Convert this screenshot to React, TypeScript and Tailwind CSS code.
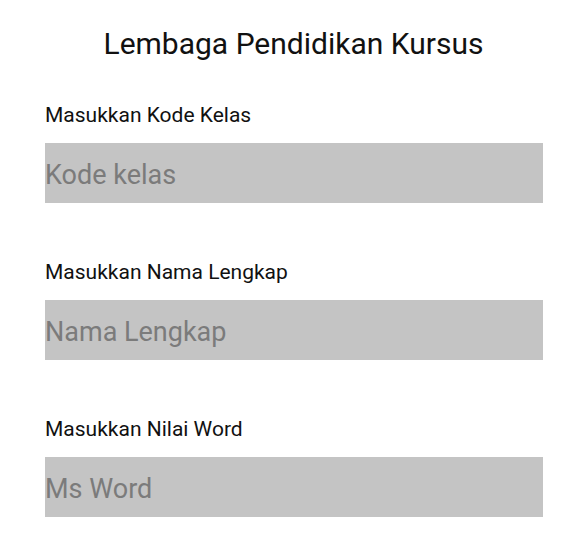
const fields = [
  { label: "Masukkan Kode Kelas", placeholder: "Kode kelas" },
  { label: "Masukkan Nama Lengkap", placeholder: "Nama Lengkap" },
  { label: "Masukkan Nilai Word", placeholder: "Ms Word" },
];

export default function App() {
  return (
    <div className="min-h-screen bg-white font-['Roboto',sans-serif] text-[#111]">
      <h1 className="pt-[26px] text-center text-[30px] leading-9 font-normal">
        Lembaga Pendidikan Kursus
      </h1>
      <div className="mt-[41px] flex flex-col gap-[57px] pl-[45px] pr-[44px]">
        {fields.map((f) => (
          <div key={f.label} className="flex flex-col gap-4">
            <label className="text-[21px] leading-6">{f.label}</label>
            <input
              type="text"
              placeholder={f.placeholder}
              className="h-[60px] w-full bg-[#c4c4c4] pt-1 text-[27px] outline-none placeholder:text-[#7b7b7b]"
            />
          </div>
        ))}
      </div>
    </div>
  );
}
